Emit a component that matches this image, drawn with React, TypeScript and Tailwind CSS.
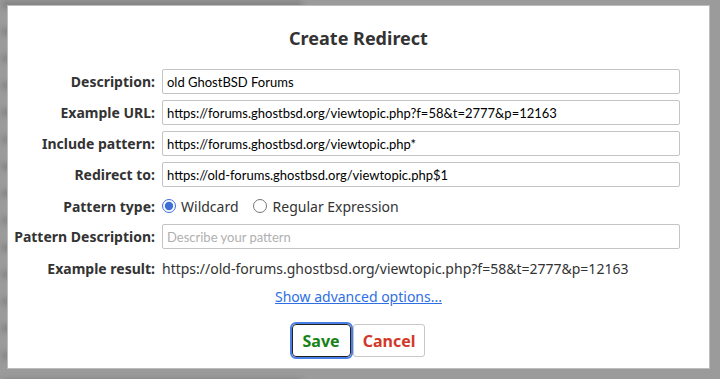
import { useState } from 'react'

const rows = [
  { label: 'Description:', value: 'old GhostBSD Forums' },
  { label: 'Example URL:', value: 'https://forums.ghostbsd.org/viewtopic.php?f=58&t=2777&p=12163' },
  { label: 'Include pattern:', value: 'https://forums.ghostbsd.org/viewtopic.php*' },
  { label: 'Redirect to:', value: 'https://old-forums.ghostbsd.org/viewtopic.php$1' },
]

const labelCls = 'w-[154px] shrink-0 text-right font-bold text-[14px] text-[#333] pr-[7px]'
const inputCls =
  'flex-1 h-[25px] border border-[#c4c4c4] rounded-[2px] px-[4px] text-[13px] text-black font-[Lato,sans-serif] outline-none'

export default function App() {
  const [type, setType] = useState('wildcard')

  return (
    <div className="relative w-[720px] h-[379px] overflow-hidden bg-[#9b9b9b] font-['Noto_Sans',sans-serif]">
      {/* blurred page behind the dialog */}
      <div className="flex flex-col gap-[22px] pt-[2px] pl-[2px] blur-[3px]">
        {[300, 120, 240, 60, 180, 90, 260, 140, 220, 80, 200, 120, 280, 160, 300, 100].map((w, i) => (
          <div key={i} className="h-[5px] bg-[#777]" style={{ width: w }} />
        ))}
      </div>

      <div className="absolute left-[8px] top-[6px] w-[701px] h-[362px] bg-white shadow-[0_0_0_1px_#bdbdbd] flex flex-col">
        <h1 className="text-center font-bold text-[18px] text-[#333] mt-[21px] mb-[20px] leading-[22px]">Create Redirect</h1>

        <div className="flex flex-col gap-[6px] pr-[29px]">
          {rows.map((r) => (
            <div key={r.label} className="flex items-center">
              <label className={labelCls}>{r.label}</label>
              <input className={inputCls} defaultValue={r.value} />
            </div>
          ))}
        </div>

        <div className="flex items-center mt-[6px] h-[26px] pr-[29px]">
          <label className={labelCls}>Pattern type:</label>
          <label className="flex items-center gap-[5px] text-[14px] text-[#333]">
            <input
              type="radio"
              name="t"
              checked={type === 'wildcard'}
              onChange={() => setType('wildcard')}
              className="m-0 w-[14px] h-[14px] accent-[#3d6fd9]"
            />
            Wildcard
          </label>
          <label className="flex items-center gap-[6px] text-[14px] text-[#333] ml-[14px]">
            <input
              type="radio"
              name="t"
              checked={type === 'regex'}
              onChange={() => setType('regex')}
              className="m-0 w-[14px] h-[14px] accent-[#3d6fd9]"
            />
            Regular Expression
          </label>
        </div>

        <div className="flex items-center mt-[5px] pr-[29px]">
          <label className={labelCls}>Pattern Description:</label>
          <input className={inputCls + ' placeholder:text-[#b0b0b0]'} placeholder="Describe your pattern" />
        </div>

        <div className="flex items-center mt-[7px] h-[24px]">
          <span className={labelCls}>Example result:</span>
          <span className="text-[14px] text-[#333]">https://old-forums.ghostbsd.org/viewtopic.php?f=58&amp;t=2777&amp;p=12163</span>
        </div>

        <div className="text-center mt-[4px]">
          <a href="#" className="text-[14px] text-[#2f6fe4] underline">Show advanced options...</a>
        </div>

        <div className="flex justify-center mt-[16px] gap-[2px]">
          <button className="h-[33px] px-[10px] rounded-[4px] border border-[#222] outline outline-2 outline-[#4a7fe8] font-bold text-[16px] text-[#178217] bg-white">
            Save
          </button>
          <button className="h-[33px] px-[9px] rounded-[3px] border border-[#c8c8c8] font-bold text-[16px] text-[#d2382a] bg-white">
            Cancel
          </button>
        </div>
      </div>
    </div>
  )
}
